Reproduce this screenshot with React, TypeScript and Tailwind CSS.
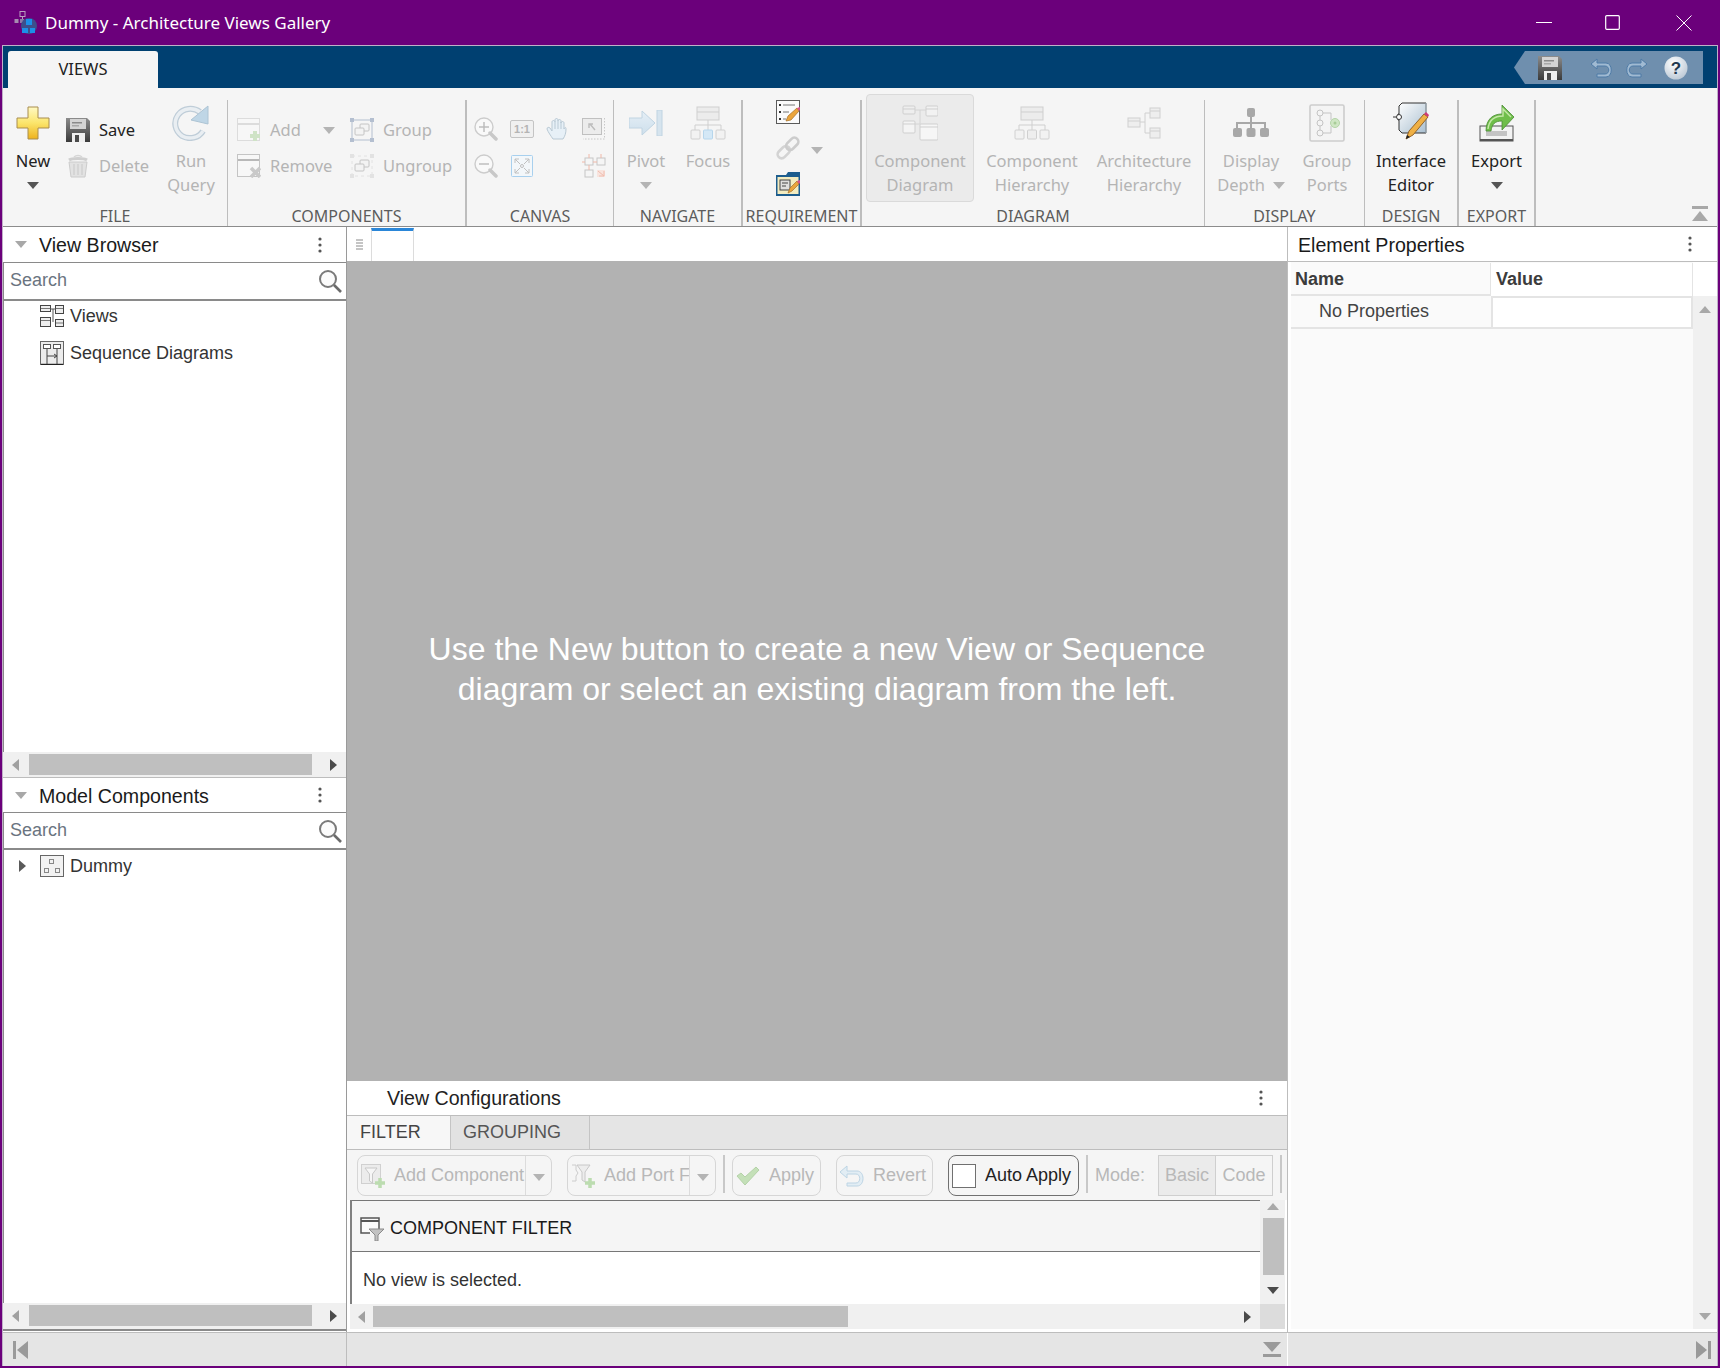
import type { ReactNode } from "react";

const ribbonFont = "font-['Noto_Sans',sans-serif]";

function Caret({ color = "#b4b4b4", dir = "down", size = 12 }: { color?: string; dir?: "down" | "up" | "left" | "right"; size?: number }) {
  const pts = {
    down: "0,0 12,0 6,7",
    up: "0,7 12,7 6,0",
    left: "7,0 7,12 0,6",
    right: "0,0 0,12 7,6",
  }[dir];
  const vert = dir === "left" || dir === "right";
  return (
    <svg width={vert ? (size * 7) / 12 : size} height={vert ? size : (size * 7) / 12} viewBox={vert ? "0 0 7 12" : "0 0 12 7"} className="block shrink-0">
      <polygon points={pts} fill={color} />
    </svg>
  );
}

function Kebab() {
  return (
    <svg width="4" height="16" viewBox="0 0 4 16" className="block">
      <circle cx="2" cy="2" r="1.6" fill="#555" />
      <circle cx="2" cy="8" r="1.6" fill="#555" />
      <circle cx="2" cy="14" r="1.6" fill="#555" />
    </svg>
  );
}

function Floppy() {
  return (
    <svg width="24" height="24" viewBox="0 0 24 24" className="block">
      <defs>
        <linearGradient id="fl" x1="0" y1="0" x2="0" y2="1">
          <stop offset="0" stopColor="#8c8c8c" />
          <stop offset="1" stopColor="#3a3a3a" />
        </linearGradient>
      </defs>
      <path d="M0 0h21l3 3v21H0z" fill="url(#fl)" />
      <rect x="4" y="1" width="16" height="10" fill="#d4d4d4" />
      <rect x="6" y="4" width="10" height="1.5" fill="#8a8a8a" />
      <rect x="6" y="7" width="7" height="1.5" fill="#a8a8a8" />
      <rect x="6" y="15" width="13" height="9" fill="#eeeeee" />
      <rect x="9" y="17" width="4" height="7" fill="#4a4a4a" />
    </svg>
  );
}

function NewIcon() {
  return (
    <svg width="34" height="34" viewBox="0 0 34 34" className="block">
      <defs>
        <linearGradient id="ny" x1="0" y1="0" x2="0" y2="1">
          <stop offset="0" stopColor="#fff9c4" />
          <stop offset="0.5" stopColor="#fbe56b" />
          <stop offset="1" stopColor="#eeb21c" />
        </linearGradient>
      </defs>
      <path d="M12 1h10v11h11v10H22v11H12V22H1V12h11z" fill="url(#ny)" stroke="#a88d4e" />
    </svg>
  );
}

function Trash() {
  return (
    <svg width="24" height="24" viewBox="0 0 24 24" fill="none" className="block">
      <path d="M3 6c3-2 15-2 18 0" stroke="#cfcfcf" strokeWidth="3" />
      <path d="M8 3c2-2 6-2 8 0" stroke="#d6d6d6" strokeWidth="1.5" />
      <path d="M3 8l2 15h14l2-15z" fill="#e2e2e2" stroke="#cccccc" />
      <path d="M8 10v11M12 10v11M16 10v11" stroke="#c8c8c8" />
    </svg>
  );
}

function RunQuery() {
  return (
    <svg width="38" height="36" viewBox="0 0 38 36" fill="none" className="block">
      <path d="M31 26C27 33 17 35 10 31C3 26 1 17 6 10C11 3 21 2 28 7" stroke="#bfcdd8" strokeWidth="6" />
      <path d="M31 26C27 33 17 35 10 31C3 26 1 17 6 10C11 3 21 2 28 7" stroke="#e9eef2" strokeWidth="3.5" />
      <polygon points="36,1 36,19 19,15" fill="#bfd6e6" stroke="#adc4d4" />
    </svg>
  );
}

function WinAdd() {
  return (
    <svg width="24" height="24" viewBox="0 0 24 24" fill="none" className="block">
      <rect x="0.5" y="0.5" width="22" height="22" fill="#f7f7f7" stroke="#dcdcdc" />
      <path d="M1 6h21" stroke="#dcdcdc" strokeWidth="2" />
      <path d="M13 18h10M18 13v10" stroke="#cfe3c6" strokeWidth="4" />
    </svg>
  );
}

function WinRemove() {
  return (
    <svg width="24" height="24" viewBox="0 0 24 24" fill="none" className="block">
      <rect x="0.5" y="0.5" width="22" height="22" fill="#f7f7f7" stroke="#c4c4c4" />
      <path d="M1 6h21" stroke="#b8b8b8" strokeWidth="2" />
      <path d="M14 14l9 9M23 14l-9 9" stroke="#c9c9c9" strokeWidth="3.5" />
    </svg>
  );
}

function GroupIcon({ faint }: { faint?: boolean }) {
  const c = faint ? "#e2e2e2" : "#b4bfd0";
  return (
    <svg width="24" height="24" viewBox="0 0 24 24" fill="none" className="block">
      {!faint && <rect x="2" y="2" width="20" height="20" stroke={c} />}
      {faint && <rect x="2" y="2" width="20" height="20" stroke={c} strokeDasharray="3 3" />}
      <rect x="0" y="0" width="4" height="4" fill={c} />
      <rect x="20" y="0" width="4" height="4" fill={c} />
      <rect x="0" y="20" width="4" height="4" fill={c} />
      <rect x="20" y="20" width="4" height="4" fill={c} />
      <rect x="10" y="6" width="9" height="7" rx="1" fill="#f3f3f3" stroke="#c4c4c4" />
      <rect x="5" y="10" width="9" height="7" rx="1" fill="#f3f3f3" stroke="#c4c4c4" />
    </svg>
  );
}

function Magnifier({ plus }: { plus?: boolean }) {
  return (
    <svg width="24" height="24" viewBox="0 0 24 24" fill="none" className="block">
      <circle cx="10" cy="10" r="9" stroke="#cccccc" strokeWidth="1.4" fill="#f9f9f9" />
      <path d="M16 16l6 6" stroke="#c8c8c8" strokeWidth="3.5" strokeLinecap="round" />
      <path d="M5 10h10" stroke="#bbbbbb" strokeWidth="1.4" />
      {plus && <path d="M10 5v10" stroke="#bbbbbb" strokeWidth="1.4" />}
    </svg>
  );
}

function OneToOne() {
  return (
    <svg width="24" height="18" viewBox="0 0 24 18" className="block">
      <rect x="0.5" y="0.5" width="23" height="17" rx="1.5" fill="#f0f0f0" stroke="#c4c4c4" />
      <text x="12" y="13" textAnchor="middle" fontSize="11" fontWeight="700" fontFamily="Liberation Sans" fill="#b4b4b4">
        1:1
      </text>
    </svg>
  );
}

function Hand() {
  return (
    <svg width="24" height="24" viewBox="0 0 24 24" className="block">
      <path
        d="M7 22C5 19 2 15 1 12c0-2 2-2 3-1l2 3V5c0-2 3-2 3 0V3c0-2 3-2 3 0v1c0-2 3-2 3 0v2c0-2 3-2 3 0v6c1-2 2-2 2 0 0 4-1 7-3 10z"
        fill="#e7f0f7"
        stroke="#b9c9d4"
      />
      <path d="M9 5v7M12 4v8M15 5v7" stroke="#b9c9d4" />
    </svg>
  );
}

function ZoomArea() {
  return (
    <svg width="24" height="22" viewBox="0 0 24 22" fill="none" className="block">
      <rect x="0.5" y="0.5" width="19" height="16" fill="#ececec" stroke="#c0c0c0" />
      <path d="M13 12L8 6M7 10V6h4" stroke="#bcbcbc" strokeWidth="1.4" />
      <path d="M22.5 0v21H1" stroke="#c8c8c8" strokeDasharray="1.5 1.5" />
    </svg>
  );
}

function FitAll() {
  return (
    <svg width="22" height="22" viewBox="0 0 22 22" fill="none" className="block">
      <rect x="0.5" y="0.5" width="21" height="21" rx="1" fill="#f3f7fa" stroke="#a8d0ee" />
      <path d="M4 4l5 5M18 4l-5 5M4 18l5-5M18 18l-5-5" stroke="#c0c0c0" />
      <path d="M4 8V4h4M14 4h4v4M4 14v4h4M18 14v4h-4" stroke="#c0c0c0" />
      <circle cx="11" cy="11" r="1.5" stroke="#c0c0c0" />
    </svg>
  );
}

function Arrange() {
  return (
    <svg width="24" height="24" viewBox="0 0 24 24" fill="none" className="block">
      <rect x="3" y="4" width="8" height="7" stroke="#c6c6c6" />
      <rect x="15" y="4" width="8" height="7" stroke="#c6c6c6" />
      <rect x="3" y="16" width="8" height="7" stroke="#c6c6c6" />
      <path d="M0 8h3M11 8h4M7 0v4M19 0v4M7 11v5" stroke="#f0b8a8" />
      <rect x="15" y="16" width="8" height="7" fill="#f8e4de" />
      <path d="M16 17l6 5M22 17v5h-5" stroke="#f0bcae" />
    </svg>
  );
}

function Pivot() {
  return (
    <svg width="34" height="26" viewBox="0 0 34 26" className="block">
      <defs>
        <linearGradient id="pv" x1="0" y1="0" x2="0" y2="1">
          <stop offset="0" stopColor="#e6eff6" />
          <stop offset="1" stopColor="#cddfec" />
        </linearGradient>
      </defs>
      <path d="M0 8h13V1l13 12-13 12v-7H0z" fill="url(#pv)" stroke="#c0d4e2" />
      <rect x="28" y="0" width="5" height="26" fill="#d6e4ee" stroke="#c0d4e2" />
    </svg>
  );
}

function Tree({ mid = "#eeeeee", midStroke = "#d0d0d0" }: { mid?: string; midStroke?: string }) {
  return (
    <svg width="36" height="34" viewBox="0 0 36 34" fill="none" className="block">
      <rect x="7" y="1" width="22" height="13" fill="#ececec" stroke="#cfcfcf" />
      <path d="M7 6h22" stroke="#cfcfcf" />
      <path d="M18 14v5M5 24v-5h26v5M18 19v5" stroke="#cfcfcf" />
      <rect x="1" y="24" width="9" height="9" rx="1" fill="#f2f2f2" stroke="#d0d0d0" />
      <rect x="13.5" y="24" width="9" height="9" rx="1" fill={mid} stroke={midStroke} />
      <rect x="26" y="24" width="9" height="9" rx="1" fill="#f2f2f2" stroke="#d0d0d0" />
    </svg>
  );
}

function CheckPencil() {
  return (
    <svg width="24" height="24" viewBox="0 0 24 24" fill="none" className="block">
      <rect x="0.5" y="0.5" width="23" height="23" fill="#fbfbfb" stroke="#5a5a5a" />
      <path d="M3 4h2v2H3zM3 11h2v2H3zM3 18h2v2H3z" fill="#333" />
      <path d="M7 5h12M7 12h6M7 19h3" stroke="#777" />
      <path d="M10 21l2-5 9-8 2 3-8 9z" fill="#eba53c" stroke="#a5702a" strokeWidth="0.7" />
      <path d="M21 8l2 3 1-1v-3z" fill="#d8538a" />
    </svg>
  );
}

function LinkIcon() {
  return (
    <svg width="24" height="24" viewBox="0 0 24 24" fill="none" className="block">
      <g transform="rotate(-45 12 12)">
        <rect x="-1" y="8" width="14" height="8" rx="4" stroke="#d3d3d3" strokeWidth="2.6" />
        <rect x="11" y="8" width="14" height="8" rx="4" stroke="#cccccc" strokeWidth="2.6" />
      </g>
    </svg>
  );
}

function FolderPencil() {
  return (
    <svg width="24" height="24" viewBox="0 0 24 24" fill="none" className="block">
      <path d="M0 3h10l2-3h12v24H0z" fill="#1d5d8e" />
      <rect x="1.5" y="5" width="21" height="17" fill="#f3ecc0" />
      <rect x="4" y="8" width="10" height="10" fill="#dedede" stroke="#444" />
      <path d="M6 11h6M6 14h4" stroke="#444" />
      <path d="M12 21l2-5 7-7 2 3-7 7z" fill="#eba53c" stroke="#a5702a" strokeWidth="0.7" />
      <path d="M21 9l2 3 1-1v-3z" fill="#d8538a" />
      <rect x="0" y="22" width="24" height="2" fill="#1d5d8e" />
    </svg>
  );
}

function ComponentDiagram() {
  return (
    <svg width="36" height="36" viewBox="0 0 36 36" fill="none" className="block">
      <rect x="1" y="1" width="12" height="8" rx="1" fill="#eeeeee" stroke="#cfcfcf" />
      <path d="M1 4h12" stroke="#cfcfcf" />
      <rect x="24" y="1" width="12" height="10" rx="1" fill="#f2f2f2" stroke="#cfcfcf" />
      <path d="M24 4h12" stroke="#cfcfcf" />
      <path d="M13 5h11M18 5v14M13 19h5" stroke="#d4d4d4" />
      <rect x="1" y="16" width="12" height="12" rx="1" fill="#f4f4f4" stroke="#cfcfcf" />
      <path d="M1 19h12" stroke="#cfcfcf" />
      <rect x="18" y="19" width="18" height="16" rx="1" fill="#f6f6f6" stroke="#cfcfcf" />
      <path d="M18 22h18" stroke="#cfcfcf" />
    </svg>
  );
}

function ArchHierarchy() {
  return (
    <svg width="34" height="32" viewBox="0 0 34 32" fill="none" className="block">
      <rect x="1" y="11" width="12" height="9" fill="#eeeeee" stroke="#d0d0d0" />
      <path d="M1 14h12" stroke="#d0d0d0" />
      <rect x="23" y="1" width="10" height="10" fill="#eeeeee" stroke="#d0d0d0" />
      <path d="M23 4h10" stroke="#d0d0d0" />
      <rect x="23" y="21" width="10" height="10" fill="#eeeeee" stroke="#d0d0d0" />
      <path d="M23 24h10" stroke="#d0d0d0" />
      <path d="M13 15h5M18 6v20M18 6h5M18 26h5" stroke="#d0d0d0" />
    </svg>
  );
}

function DisplayDepth() {
  return (
    <svg width="36" height="32" viewBox="0 0 36 32" fill="none" className="block">
      <rect x="14" y="1" width="8" height="9" rx="2" fill="#a8a8a8" />
      <path d="M18 10v6M4 21v-5h28v5M18 16v5" stroke="#a8a8a8" strokeWidth="2" />
      <rect x="0" y="21" width="9" height="9" rx="2" fill="#a8a8a8" />
      <rect x="13.5" y="21" width="9" height="9" rx="2" fill="#a8a8a8" />
      <rect x="27" y="21" width="9" height="9" rx="2" fill="#a8a8a8" />
    </svg>
  );
}

function GroupPorts() {
  return (
    <svg width="36" height="38" viewBox="0 0 36 38" fill="none" className="block">
      <rect x="1" y="1" width="34" height="36" rx="1.5" fill="#f4f4f4" stroke="#cdcdcd" strokeWidth="1.6" />
      <circle cx="11" cy="9" r="3" fill="#f4f4f4" stroke="#c4c4c4" />
      <circle cx="11" cy="19" r="3" fill="#f4f4f4" stroke="#c4c4c4" />
      <circle cx="11" cy="29" r="3" fill="#f4f4f4" stroke="#c4c4c4" />
      <path d="M14 9h8v7M14 29h8v-7M11 12v4M11 22v4" stroke="#c4c4c4" />
      <circle cx="26" cy="19" r="4.5" fill="#cfe6c4" stroke="#b5d4a8" />
      <circle cx="26" cy="19" r="1.5" fill="#a8cc98" />
    </svg>
  );
}

function InterfaceEditor() {
  return (
    <svg width="36" height="42" viewBox="0 0 36 42" fill="none" className="block">
      <defs>
        <linearGradient id="ie" x1="0" y1="0" x2="1" y2="1">
          <stop offset="0" stopColor="#ffffff" />
          <stop offset="1" stopColor="#a9bfd0" />
        </linearGradient>
      </defs>
      <path d="M33 1H9L6 4v8H5v6h1v10l3 3h24z" fill="url(#ie)" stroke="#333" strokeWidth="1" />
      <path d="M33 1v30" stroke="#b9c9d4" />
      <circle cx="6" cy="15" r="2.5" fill="#fff" stroke="#333" />
      <path d="M0 15h3" stroke="#333" />
      <path d="M13 37l3-8 15-17 4 3-15 18z" fill="#efb045" stroke="#8a5a20" strokeWidth="0.9" />
      <path d="M31 12l4 3 1-2-3-3z" fill="#cf3a78" />
      <path d="M13 37l1-4 3 2z" fill="#222" />
    </svg>
  );
}

function ExportIcon() {
  return (
    <svg width="36" height="38" viewBox="0 0 36 38" fill="none" className="block">
      <rect x="1" y="22" width="33" height="15" fill="#f3f3f3" stroke="#555" />
      <rect x="7" y="27" width="21" height="5" fill="#c4c4c4" />
      <rect x="1" y="35" width="33" height="2" fill="#555" />
      <path d="M7 27C7 15 14 10 23 10V1l12 12-12 13v-9c-7 0-10 3-11 10z" fill="#6fbe4a" stroke="#4a8a35" strokeWidth="0.8" />
      <path d="M9 25c1-9 6-13 15-13V5l8 8" stroke="#c5e8a8" strokeWidth="1.4" />
    </svg>
  );
}

function SearchIcon() {
  return (
    <svg width="24" height="24" viewBox="0 0 24 24" fill="none" className="block">
      <circle cx="10" cy="10" r="8" stroke="#7a7a7a" strokeWidth="2" fill="#fbfbfb" />
      <path d="M16 16l7 7" stroke="#6a6a6a" strokeWidth="2.6" />
    </svg>
  );
}

function ViewsIcon() {
  return (
    <svg width="24" height="22" viewBox="0 0 24 22" fill="none" className="block">
      <rect x="0.5" y="0.5" width="10" height="6" fill="#eee" stroke="#444" />
      <path d="M1 3.5h9" stroke="#777" />
      <rect x="15.5" y="0.5" width="8" height="8" fill="#eee" stroke="#444" />
      <path d="M16 3.5h7" stroke="#777" />
      <path d="M10 4h6M13 4v13" stroke="#555" />
      <rect x="0.5" y="12.5" width="10" height="9" fill="#eee" stroke="#444" />
      <path d="M1 15.5h9" stroke="#777" />
      <rect x="15.5" y="14.5" width="8" height="7" fill="#eee" stroke="#444" />
      <path d="M16 18h7" stroke="#777" />
    </svg>
  );
}

function SeqIcon() {
  return (
    <svg width="24" height="24" viewBox="0 0 24 24" fill="none" className="block">
      <rect x="0.5" y="0.5" width="23" height="23" fill="#ececec" stroke="#666" />
      <path d="M1 23.3h22" stroke="#111" />
      <rect x="3.5" y="3.5" width="7" height="4" fill="#fff" stroke="#555" />
      <rect x="13.5" y="3.5" width="7" height="4" fill="#fff" stroke="#555" />
      <path d="M7 8v15M17 8v15M7 15h10M14 13l3 2-3 2" stroke="#444" />
    </svg>
  );
}

function DummyIcon() {
  return (
    <svg width="24" height="22" viewBox="0 0 24 22" fill="none" className="block">
      <rect x="0.5" y="0.5" width="23" height="21" fill="#f2f2f2" stroke="#666" />
      <rect x="9.5" y="4.5" width="4" height="4" stroke="#888" />
      <rect x="4.5" y="13.5" width="4" height="4" stroke="#888" />
      <rect x="15.5" y="13.5" width="4" height="4" stroke="#888" />
    </svg>
  );
}

function FilterAdd() {
  return (
    <svg width="24" height="24" viewBox="0 0 24 24" fill="none" className="block">
      <rect x="0.5" y="0.5" width="19" height="19" fill="#ececec" stroke="#d0d0d0" />
      <path d="M4 4h12l-4.5 6v9l-3-2v-7z" fill="#f6f6f6" stroke="#c8c8c8" />
      <path d="M14 19h10M19 14v10" stroke="#bcdcb0" strokeWidth="3.5" />
    </svg>
  );
}

function PortFilterAdd() {
  return (
    <svg width="24" height="24" viewBox="0 0 24 24" fill="none" className="block">
      <path d="M1 1h4v5l2 3-2 3v5H1" stroke="#cccccc" />
      <path d="M6 1h13l-5 7v10l-3-2V8z" fill="#ededed" stroke="#c8c8c8" />
      <path d="M14 19h10M19 14v10" stroke="#bcdcb0" strokeWidth="3.5" />
    </svg>
  );
}

function CheckIcon() {
  return (
    <svg width="24" height="20" viewBox="0 0 24 20" className="block">
      <path d="M1 10l4-3 4 4L20 1l3 3L9 19z" fill="#c4e0b8" stroke="#b4d2a8" />
    </svg>
  );
}

function RevertIcon() {
  return (
    <svg width="24" height="22" viewBox="0 0 24 22" fill="none" className="block">
      <path d="M7 1L0 7l7 6V9h9c5 0 5 9 0 9H7v3h10c8 0 8-15 0-15H7z" fill="#e2edf4" stroke="#bcd4e4" />
    </svg>
  );
}

function UndoRedo({ flip }: { flip?: boolean }) {
  return (
    <svg width="22" height="20" viewBox="0 0 22 20" fill="none" className={flip ? "block -scale-x-100" : "block"}>
      <path d="M7 1L1 6l6 5V8h8c5 0 5 8 0 8H7v3h9c7 0 7-14 0-14H7z" fill="#a0bad2" stroke="#4f7ba6" />
    </svg>
  );
}

function HelpIcon() {
  return (
    <svg width="24" height="24" viewBox="0 0 24 24" className="block">
      <defs>
        <radialGradient id="hp" cx="0.4" cy="0.3" r="0.8">
          <stop offset="0" stopColor="#ffffff" />
          <stop offset="1" stopColor="#b6c4d2" />
        </radialGradient>
      </defs>
      <circle cx="12" cy="12" r="11.5" fill="url(#hp)" />
      <text x="12" y="18" textAnchor="middle" fontSize="17" fontWeight="700" fontFamily="Liberation Sans" fill="#22384e">
        ?
      </text>
    </svg>
  );
}

function FilterHeaderIcon() {
  return (
    <svg width="24" height="24" viewBox="0 0 24 24" fill="none" className="block">
      <path d="M19 13V1H1v15h9" fill="#fafafa" stroke="#555" strokeWidth="1.5" />
      <path d="M1 4h18" stroke="#555" strokeWidth="2" />
      <path d="M9 12h15l-6 6v6h-3v-6z" fill="#c2c2c2" stroke="#8a8a8a" />
    </svg>
  );
}

function AppIcon() {
  return (
    <svg width="24" height="24" viewBox="0 0 24 24" fill="none" className="block">
      <rect x="6" y="0.5" width="5" height="5" stroke="#b9a0c0" />
      <path d="M8.5 5.5v6" stroke="#b9a0c0" />
      <rect x="0.5" y="8" width="4" height="4" fill="#a68cb0" />
      <rect x="6" y="8" width="4" height="4" fill="#8f7aa8" />
      <circle cx="15" cy="15" r="8" fill="#3c4f8c" />
      <rect x="12" y="8" width="6" height="6" fill="#1c8fe8" />
      <rect x="8" y="17" width="6" height="5" fill="#1c8fe8" />
      <rect x="16" y="17" width="5" height="5" fill="#1c8fe8" />
    </svg>
  );
}

function Big({
  icon,
  lines,
  dark,
  caret,
  inlineCaret,
  className,
}: {
  icon: ReactNode;
  lines: string[];
  dark?: boolean;
  caret?: boolean;
  inlineCaret?: boolean;
  className: string;
}) {
  return (
    <div className={`flex flex-col items-center ${className}`}>
      <div className="flex h-[46px] items-center justify-center">{icon}</div>
      <div className={`mt-[3px] flex flex-col items-center text-[16.5px] leading-[24px] ${dark ? "text-[#222]" : "text-[#b4b4b4]"}`}>
        {lines.map((l, i) => (
          <div key={l} className="flex items-center whitespace-nowrap">
            {l}
            {inlineCaret && i === lines.length - 1 ? (
              <span className="ml-[8px]">
                <Caret />
              </span>
            ) : null}
          </div>
        ))}
        {caret ? (
          <div className="flex h-[24px] items-center">
            <Caret color={dark ? "#555" : "#b4b4b4"} />
          </div>
        ) : null}
      </div>
    </div>
  );
}

function Small({ icon, label, dark, className = "" }: { icon: ReactNode; label: string; dark?: boolean; className?: string }) {
  return (
    <div className={`flex h-[36px] items-center ${className}`}>
      <span className="flex w-[24px] shrink-0 justify-center">{icon}</span>
      <span className={`ml-[9px] whitespace-nowrap text-[16.5px] ${dark ? "text-[#222]" : "text-[#b4b4b4]"}`}>{label}</span>
    </div>
  );
}

function Section({ label, className, children }: { label: string; className: string; children: ReactNode }) {
  return (
    <div className={`flex shrink-0 flex-col border-[#bdbdbd] ${className}`}>
      <div className="flex min-h-0 flex-1">{children}</div>
      <div className="h-[20px] whitespace-nowrap text-center text-[16px] leading-[20px] text-[#5c5c5c]">{label}</div>
    </div>
  );
}

function Ribbon() {
  return (
    <div className={`flex h-[139px] shrink-0 border-b border-[#8c8c8c] bg-[#f5f5f5] pt-[12px] ${ribbonFont}`}>
      <Section label="FILE" className="w-[225px] border-r">
        <Big className="w-[60px]" dark caret icon={<NewIcon />} lines={["New"]} />
        <div className="w-[103px] pl-[3px] pt-[12px]">
          <Small dark icon={<Floppy />} label="Save" />
          <Small icon={<Trash />} label="Delete" />
        </div>
        <Big className="w-[50px]" icon={<RunQuery />} lines={["Run", "Query"]} />
      </Section>
      <Section label="COMPONENTS" className="w-[239px] border-r-2">
        <div className="w-[122px] pl-[9px] pt-[12px]">
          <div className="flex items-center">
            <Small icon={<WinAdd />} label="Add" />
            <span className="ml-[22px]">
              <Caret />
            </span>
          </div>
          <Small icon={<WinRemove />} label="Remove" />
        </div>
        <div className="pt-[12px]">
          <Small icon={<GroupIcon />} label="Group" />
          <Small icon={<GroupIcon faint />} label="Ungroup" />
        </div>
      </Section>
      <Section label="CANVAS" className="w-[147px] border-r">
        <div className="grid grid-cols-[36px_36px_36px_36px] grid-rows-[37px_37px] place-items-center pl-px pt-[10px]">
          <Magnifier plus />
          <OneToOne />
          <Hand />
          <ZoomArea />
          <Magnifier />
          <FitAll />
          <span />
          <Arrange />
        </div>
      </Section>
      <Section label="NAVIGATE" className="w-[129px] border-r-2">
        <Big className="w-[64px]" caret icon={<Pivot />} lines={["Pivot"]} />
        <Big className="w-[60px]" icon={<Tree mid="#d4e8f6" midStroke="#b6d6ec" />} lines={["Focus"]} />
      </Section>
      <Section label="REQUIREMENT" className="w-[119px] border-r-2">
        <div className="flex flex-col gap-[12px] pl-[33px]">
          <CheckPencil />
          <div className="flex items-center">
            <LinkIcon />
            <span className="ml-[11px] mt-[4px]">
              <Caret />
            </span>
          </div>
          <FolderPencil />
        </div>
      </Section>
      <Section label="DIAGRAM" className="w-[343px] border-r">
        <div className="-mt-[6px] ml-[4px] h-[108px] w-[108px] rounded-[4px] border border-[#dadada] bg-[#ebebeb]">
          <Big className="pt-[5px]" icon={<ComponentDiagram />} lines={["Component", "Diagram"]} />
        </div>
        <Big className="ml-[3px] w-[110px]" icon={<Tree />} lines={["Component", "Hierarchy"]} />
        <Big className="w-[114px]" icon={<ArchHierarchy />} lines={["Architecture", "Hierarchy"]} />
      </Section>
      <Section label="DISPLAY" className="w-[160px] border-r">
        <Big className="ml-[6px] w-[80px]" inlineCaret icon={<DisplayDepth />} lines={["Display", "Depth"]} />
        <Big className="ml-[6px] w-[60px]" icon={<GroupPorts />} lines={["Group", "Ports"]} />
      </Section>
      <Section label="DESIGN" className="w-[94px] border-r-2">
        <Big className="w-[92px]" dark icon={<InterfaceEditor />} lines={["Interface", "Editor"]} />
      </Section>
      <Section label="EXPORT" className="w-[77px] border-r-2">
        <Big className="w-[75px]" dark caret icon={<ExportIcon />} lines={["Export"]} />
      </Section>
      <div className="flex flex-1 items-end justify-end pb-[4px] pr-[9px]">
        <svg width="16" height="16" viewBox="0 0 16 16" className="block">
          <rect x="0" y="0" width="16" height="3" fill="#a8a8a8" />
          <polygon points="8,5 16,15 0,15" fill="#a8a8a8" />
        </svg>
      </div>
    </div>
  );
}

function TabStrip() {
  return (
    <div className={`flex h-[42px] shrink-0 items-end justify-between bg-[#004071] pl-[5px] pr-[14px] ${ribbonFont}`}>
      <div className="flex h-[37px] w-[150px] items-center justify-center rounded-t-[3px] bg-[#f5f5f5] text-[16.5px] text-[#222]">VIEWS</div>
      <div className="mb-[4px] flex h-[33px] items-center">
        <svg width="11" height="33" viewBox="0 0 11 33" className="block">
          <polygon points="11,0 11,33 0,16.5" fill="#6f8fae" />
        </svg>
        <div className="flex h-[33px] w-[178px] items-center bg-[#6f8fae] pl-[13px]">
          <Floppy />
          <span className="ml-[28px]">
            <UndoRedo />
          </span>
          <span className="ml-[14px]">
            <UndoRedo flip />
          </span>
          <span className="ml-[16px]">
            <HelpIcon />
          </span>
        </div>
      </div>
    </div>
  );
}

function PaneHeader({ title, className }: { title: string; className: string }) {
  return (
    <div className={`flex shrink-0 items-center bg-white pr-[24px] ${className}`}>
      <span className="ml-[12px] w-[24px]">
        <Caret color="#a8a8a8" />
      </span>
      <span className="flex-1 pt-[3px] text-[19.6px] text-[#1a1a1a]">{title}</span>
      <Kebab />
    </div>
  );
}

function SearchBox({ className }: { className: string }) {
  return (
    <div className={`flex shrink-0 items-center justify-between border-b-2 border-l border-t border-[#8a8a8a] bg-white pl-[6px] pr-[4px] ${className}`}>
      <span className="text-[18px] text-[#6a7480]">Search</span>
      <SearchIcon />
    </div>
  );
}

function LeftScroll({ line }: { line: string }) {
  return (
    <div className={`flex h-[26px] shrink-0 items-center bg-[#f0f0f0] ${line}`}>
      <span className="flex w-[26px] justify-center pr-px">
        <Caret dir="left" color="#a0a0a0" />
      </span>
      <div className="h-[21px] w-[283px] bg-[#bfbfbf]" />
      <span className="ml-[18px]">
        <Caret dir="right" color="#4a4a4a" />
      </span>
    </div>
  );
}

function TreeRow({ icon, label, arrow, className }: { icon: ReactNode; label: string; arrow?: boolean; className: string }) {
  return (
    <div className={`flex items-center ${className}`}>
      <span className="flex w-[36px] justify-center">{arrow ? <Caret dir="right" color="#5a5a5a" /> : null}</span>
      <span className="flex w-[30px] shrink-0">{icon}</span>
      <span className="text-[18px] text-[#333]">{label}</span>
    </div>
  );
}

function LeftColumn() {
  return (
    <div className="flex w-[344px] shrink-0 flex-col border-r border-[#9a9a9a] bg-white">
      <PaneHeader title="View Browser" className="h-[35px]" />
      <SearchBox className="h-[39px] pb-[1px]" />
      <div className="min-h-0 flex-1 border-l border-[#8a8a8a]">
        <TreeRow icon={<ViewsIcon />} label="Views" className="h-[30px]" />
        <TreeRow icon={<SeqIcon />} label="Sequence Diagrams" className="mt-[7px] h-[30px]" />
      </div>
      <LeftScroll line="border-b border-[#bdbdbd]" />
      <PaneHeader title="Model Components" className="h-[34px]" />
      <SearchBox className="h-[38px]" />
      <div className="min-h-0 flex-1 border-l border-[#8a8a8a] pt-[2px]">
        <TreeRow arrow icon={<DummyIcon />} label="Dummy" className="h-[28px]" />
      </div>
      <LeftScroll line="pb-px" />
      <div className="h-[2px] shrink-0 bg-[#8a8a8a]" />
      <div className="h-[1px] shrink-0 bg-white" />
    </div>
  );
}

function ToolBtn({ icon, label, width, split, dark }: { icon: ReactNode; label: string; width: string; split?: boolean; dark?: boolean }) {
  return (
    <div className={`flex h-[41px] shrink-0 items-center rounded-[8px] border bg-[#f5f5f5] pl-[3px] ${dark ? "border-[#707070]" : "border-[#d6d6d6]"} ${width}`}>
      <span className="flex w-[24px] shrink-0 justify-center">{icon}</span>
      <span className={`ml-[9px] flex-1 overflow-hidden whitespace-nowrap text-[18px] ${dark ? "text-[#222]" : "text-[#b8b8b8]"}`}>{label}</span>
      {split ? (
        <span className="flex h-full w-[26px] shrink-0 items-center justify-center border-l border-[#dcdcdc] pt-[3px]">
          <Caret />
        </span>
      ) : null}
    </div>
  );
}

function BottomPanel() {
  return (
    <div className="flex h-[251px] shrink-0 flex-col bg-white">
      <div className="flex h-[35px] shrink-0 items-center border-b border-[#bdbdbd] bg-white pl-[40px] pr-[24px]">
        <span className="flex-1 pt-[1px] text-[19.6px] text-[#222]">View Configurations</span>
        <Kebab />
      </div>
      <div className="flex h-[34px] shrink-0 border-b border-[#bdbdbd] bg-[#e5e5e5] text-[18px]">
        <div className="flex w-[103px] items-center bg-[#f7f7f7] pl-[13px] text-[#444]">FILTER</div>
        <div className="-mb-px flex w-[140px] items-center border-b border-l border-r border-[#c4c4c4] bg-[#e2e2e2] pl-[12px] text-[#555]">GROUPING</div>
      </div>
      <div className="flex h-[50px] shrink-0 items-start bg-[#f5f5f5] pl-[10px] pt-[5px]">
        <ToolBtn split icon={<FilterAdd />} label="Add Component" width="w-[195px]" />
        <span className="ml-[15px]">
          <ToolBtn split icon={<PortFilterAdd />} label="Add Port F" width="w-[149px]" />
        </span>
        <span className="ml-[7px] h-[38px] w-[2px] bg-[#c8c8c8]" />
        <span className="ml-[7px]">
          <ToolBtn icon={<CheckIcon />} label="Apply" width="w-[89px]" />
        </span>
        <span className="ml-[15px]">
          <ToolBtn icon={<RevertIcon />} label="Revert" width="w-[97px]" />
        </span>
        <span className="ml-[15px]">
          <ToolBtn dark icon={<span className="h-[24px] w-[24px] border border-[#707070] bg-white" />} label="Auto Apply" width="w-[131px]" />
        </span>
        <span className="ml-[7px] h-[38px] w-[2px] bg-[#c8c8c8]" />
        <span className="ml-[7px] flex h-[41px] w-[63px] items-center text-[18px] text-[#b8b8b8]">Mode:</span>
        <div className="flex h-[41px] border border-[#cfcfcf] text-[18px] text-[#b8b8b8]">
          <span className="flex w-[57px] items-center justify-center border-r border-[#cfcfcf] bg-[#ebebeb]">Basic</span>
          <span className="flex w-[56px] items-center justify-center">Code</span>
        </div>
        <span className="ml-[7px] h-[38px] w-[2px] bg-[#c8c8c8]" />
      </div>
      <div className="flex min-h-0 flex-1 pl-[3px] pr-[2px]">
        <div className="flex w-[910px] shrink-0 flex-col border-l-2 border-[#808080]">
          <div className="flex h-[52px] shrink-0 items-center border-b border-t border-[#777] bg-[#f5f5f5] pl-[8px] pt-[5px]">
            <FilterHeaderIcon />
            <span className="ml-[6px] text-[18px] text-[#1a1a1a]">COMPONENT FILTER</span>
          </div>
          <div className="flex flex-1 items-center pl-[11px] pt-[4px] text-[18px] text-[#333]">No view is selected.</div>
        </div>
        <div className="flex w-[25px] shrink-0 flex-col items-center bg-[#f0f0f0]">
          <span className="flex h-[12px] items-center">
            <Caret dir="up" color="#a8a8a8" />
          </span>
          <div className="ml-px mt-[6px] h-[57px] w-[21px] bg-[#bfbfbf]" />
          <span className="mt-[9px] flex h-[12px] items-center">
            <Caret color="#4a4a4a" />
          </span>
        </div>
      </div>
      <div className="flex h-[25px] shrink-0 pl-[3px] pr-[2px]">
        <div className="flex w-[910px] shrink-0 items-center bg-[#f0f0f0]">
          <span className="flex w-[23px] justify-center">
            <Caret dir="left" color="#a0a0a0" />
          </span>
          <div className="h-[21px] w-[475px] bg-[#bfbfbf]" />
          <span className="ml-auto mr-[9px]">
            <Caret dir="right" color="#4a4a4a" />
          </span>
        </div>
        <div className="w-[25px] shrink-0 bg-[#dcdcdc]" />
      </div>
      <div className="h-[3px] shrink-0 bg-white" />
    </div>
  );
}

function CenterColumn() {
  return (
    <div className="flex w-[941px] shrink-0 flex-col border-r border-[#bdbdbd] bg-white">
      <div className="flex h-[34px] shrink-0 bg-white pl-[9px]">
        <svg width="7" height="12" viewBox="0 0 7 12" className="mt-[12px] block">
          <path d="M0 1h7M0 4h7M0 7h7M0 10h7" stroke="#8a8a8a" />
        </svg>
        <div className="ml-[8px] mt-px w-[43px] border-x border-[#dcdcdc] border-t-[3px] border-t-[#2a86d8] bg-white" />
      </div>
      <div className="flex min-h-0 flex-1 items-center justify-center bg-[#b2b2b2] pb-[4px] text-center text-[32px] leading-[40px] text-white">
        <div>
          Use the New button to create a new View or Sequence
          <br />
          diagram or select an existing diagram from the left.
        </div>
      </div>
      <BottomPanel />
    </div>
  );
}

function RightColumn() {
  return (
    <div className="flex w-[429px] shrink-0 flex-col bg-white">
      <div className="flex h-[34px] shrink-0 items-center pl-[10px] pr-[25px]">
        <span className="flex-1 pt-[3px] text-[19.6px] text-[#1a1a1a]">Element Properties</span>
        <Kebab />
      </div>
      <div className="flex min-h-0 flex-1 border-t border-[#bdbdbd] pl-[3px]">
        <div className="flex min-w-0 flex-1 flex-col bg-[#fafafa] pt-[1px]">
          <div className="flex h-[33px] shrink-0 text-[18px] font-bold text-[#3c3c3c]">
            <div className="flex w-[200px] items-center border-b-2 border-r border-[#e4e4e4] pl-[4px] pt-[1px]">Name</div>
            <div className="flex w-[202px] items-center border-r border-[#e4e4e4] bg-white pl-[5px]">Value</div>
          </div>
          <div className="flex h-[33px] shrink-0 border-b-2 border-[#e4e4e4] text-[18px] text-[#444]">
            <div className="flex w-[200px] items-center pl-[28px]">No Properties</div>
            <div className="w-[202px] border-x-2 border-t-2 border-[#e4e4e4] bg-white" />
          </div>
        </div>
        <div className="flex w-[24px] shrink-0 flex-col pt-[34px]">
          <div className="flex flex-1 flex-col items-center justify-between bg-[#f0f0f0] pb-[9px] pt-[10px]">
            <Caret dir="up" color="#a8a8a8" />
            <Caret color="#a8a8a8" />
          </div>
        </div>
      </div>
      <div className="h-[3px] shrink-0 bg-white" />
    </div>
  );
}

function Footer() {
  return (
    <div className="flex h-[34px] shrink-0 border-t border-[#bdbdbd] bg-[#e5e5e5]">
      <div className="flex w-[344px] shrink-0 items-center border-r border-[#bdbdbd] pl-[10px]">
        <svg width="16" height="18" viewBox="0 0 16 18" className="block">
          <rect x="0" y="0" width="3" height="18" fill="#9a9a9a" />
          <polygon points="15,0 15,18 4,9" fill="#9a9a9a" />
        </svg>
      </div>
      <div className="flex w-[941px] shrink-0 items-center justify-end border-r border-white pr-[6px]">
        <svg width="18" height="15" viewBox="0 0 18 15" className="block">
          <polygon points="0,0 18,0 9,10" fill="#9a9a9a" />
          <rect x="0" y="12" width="18" height="3" fill="#9a9a9a" />
        </svg>
      </div>
      <div className="flex flex-1 items-center justify-end pr-[6px]">
        <svg width="16" height="18" viewBox="0 0 16 18" className="block">
          <polygon points="1,0 1,18 12,9" fill="#9a9a9a" />
          <rect x="13" y="0" width="3" height="18" fill="#9a9a9a" />
        </svg>
      </div>
    </div>
  );
}

export default function App() {
  return (
    <div className="flex h-[1368px] w-[1720px] flex-col overflow-hidden bg-[#6b007b] font-['Liberation_Sans',sans-serif]">
      <div className={`flex h-[45px] shrink-0 items-center pl-[14px] text-white ${ribbonFont}`}>
        <AppIcon />
        <span className="ml-[7px] flex-1 text-[17px]">Dummy - Architecture Views Gallery</span>
        <svg width="16" height="16" viewBox="0 0 16 16" className="mr-[53px] block">
          <path d="M0 7.5h16" stroke="#fff" />
        </svg>
        <svg width="15" height="15" viewBox="0 0 15 15" className="mr-[56px] block">
          <rect x="0.7" y="0.7" width="13.6" height="13.6" rx="1" fill="none" stroke="#fff" strokeWidth="1.2" />
        </svg>
        <svg width="16" height="16" viewBox="0 0 16 16" className="mr-[28px] block">
          <path d="M0.5 0.5l15 15M15.5 0.5l-15 15" stroke="#fff" />
        </svg>
      </div>
      <div className="mx-[2px] flex h-[1321px] shrink-0 flex-col border-x border-t border-[#c0b0c8] bg-white">
        <TabStrip />
        <Ribbon />
        <div className="flex min-h-0 flex-1">
          <LeftColumn />
          <CenterColumn />
          <RightColumn />
        </div>
        <Footer />
      </div>
    </div>
  );
}
